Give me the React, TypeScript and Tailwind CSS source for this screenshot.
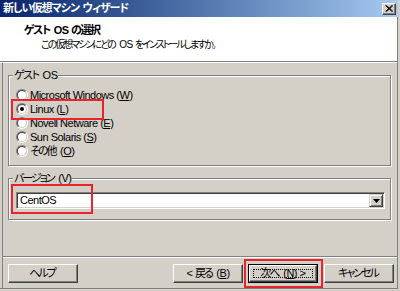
import { ReactNode } from 'react';

const font = "font-['Liberation_Sans','Noto_Sans_CJK_JP',sans-serif] [font-feature-settings:'palt']";

// MS UI Gothic kana are much narrower than Noto's, so Japanese runs get pulled in;
// the right padding gives back the space eaten after the last glyph
const J = ({ children, tight = false }: { children: ReactNode; tight?: boolean }) => (
  <span className={tight ? 'pr-[1.5px] tracking-[-1.5px]' : 'pr-[2px] tracking-[-2px]'}>{children}</span>
);

const Mnemonic = ({ children }: { children: ReactNode }) => <span className="underline underline-offset-1">{children}</span>;

const Radio = ({ checked = false, label }: { checked?: boolean; label: ReactNode }) => (
  <div className="flex h-[14px] items-center">
    <span className="flex h-[12px] w-[12px] items-center justify-center rounded-full border border-t-[#808080] border-l-[#808080] border-b-white border-r-white">
      <span className="flex h-[10px] w-[10px] items-center justify-center rounded-full border border-t-[#404040] border-l-[#404040] border-b-[#d4d0c8] border-r-[#d4d0c8] bg-white">
        {checked && <span className="h-[4px] w-[4px] rounded-full bg-black" />}
      </span>
    </span>
    <span className="ml-[2px] whitespace-pre text-[11px] leading-[13px]">{label}</span>
  </div>
);

const GroupBox = ({ label, className, children }: { label: ReactNode; className: string; children: ReactNode }) => (
  <div className={`relative ml-[5px] mr-[6px] border border-[#808080] shadow-[1px_1px_0_#fff,inset_1px_1px_0_#fff] ${className}`}>
    <span className="absolute -top-[7px] left-[4px] whitespace-pre bg-[#d4d0c8] px-[1px] text-[11px] leading-[13px]">{label}</span>
    {children}
  </div>
);

const Button = ({ children, primary = false }: { children: ReactNode; primary?: boolean }) => (
  <div className={`h-[19px] w-[70px] ${primary ? 'border border-black' : ''}`}>
    <div className="relative flex h-full w-full items-center justify-center whitespace-pre border border-t-white border-l-white border-b-[#404040] border-r-[#404040] bg-[#d4d0c8] text-[11px] leading-[13px] shadow-[inset_-1px_-1px_0_#808080]">
      {primary && <span className="absolute inset-[3px] border border-dotted border-black" />}
      {children}
    </div>
  </div>
);

export default function App() {
  return (
    <div className={`relative h-[291px] w-[400px] overflow-hidden bg-[#d4d0c8] tracking-[-0.5px] text-black ${font}`}>
      <div className="flex h-[289px] w-[398px] flex-col">
        <div className="flex h-[17px] items-center bg-gradient-to-r from-[#0a246a] to-[#a6caf0] pl-[3px] pr-[2px]">
          <span className="flex-1 whitespace-pre text-[11px] font-bold leading-[13px] text-white">
            <span className="pr-[1px] tracking-[-1px]">新しい仮想マシン</span> <span className="tracking-[-1px]">ウィザード</span>
          </span>
          <span className="flex h-[12px] w-[14px] items-center justify-center border border-t-white border-l-white border-b-[#404040] border-r-[#404040] bg-[#d4d0c8] shadow-[inset_-1px_-1px_0_#808080]">
            <svg width="8" height="7" viewBox="0 0 8 7">
              <path d="M0.5 0.5 L7 6.5 M1.5 0.5 L8 6.5 M7 0.5 L0.5 6.5 M8 0.5 L1.5 6.5" stroke="black" strokeWidth="1" />
            </svg>
          </span>
        </div>

        <div className="flex flex-1 flex-col border-r border-[#808080]">
          <div className="h-[44px] bg-white pt-[7px]">
            <div className="whitespace-pre pl-[24px] text-[11px] font-bold leading-[13px]">
              <J tight>ゲスト</J> OS <J tight>の選択</J>
            </div>
            <div className="mt-[2px] whitespace-pre pl-[41px] text-[10px] leading-[12px]">
              <J>この仮想マシンにどの</J> OS <J>をインストールしますか。</J>
            </div>
          </div>
          <div className="h-px bg-[#808080]" />
          <div className="h-px bg-white" />

          <div className="ml-[2px] flex flex-1 flex-col border-l border-[#808080]">
            <GroupBox label={<><J tight>ゲスト</J> OS</>} className="mt-[12px] h-[91px] pl-[7px] pt-[12px]">
              <Radio label={<>Microsoft Windows (<Mnemonic>W</Mnemonic>)</>} />
              <Radio checked label={<>Linux (<Mnemonic>L</Mnemonic>)</>} />
              <Radio label={<>Novell Netware (<Mnemonic>E</Mnemonic>)</>} />
              <Radio label={<>Sun Solaris (<Mnemonic>S</Mnemonic>)</>} />
              <Radio label={<><J>その他</J> (<Mnemonic>O</Mnemonic>)</>} />
            </GroupBox>

            <GroupBox label={<><J>バージョン</J> (V)</>} className="mt-[12px] h-[42px] pl-[7px] pr-[5px] pt-[13px]">
              <div className="flex h-[17px] items-center border border-t-[#808080] border-l-[#808080] border-b-white border-r-white bg-white shadow-[inset_1px_1px_0_#404040,inset_-1px_-1px_0_#d4d0c8]">
                <span className="flex-1 pl-[3px] text-[11px] leading-[13px]">CentOS</span>
                <span className="mr-[1px] flex h-[13px] w-[14px] items-center justify-center border border-t-[#d4d0c8] border-l-[#d4d0c8] border-b-[#404040] border-r-[#404040] bg-[#d4d0c8] shadow-[inset_1px_1px_0_#fff,inset_-1px_-1px_0_#808080]">
                  <svg width="7" height="4" viewBox="0 0 7 4">
                    <path d="M0 0 H7 L3.5 4 Z" fill="black" />
                  </svg>
                </span>
              </div>
            </GroupBox>

            <div className="flex-1" />
            <div className="h-px bg-[#808080]" />
            <div className="h-px bg-white" />

            <div className="flex h-[30px] items-start pl-[5px] pr-[3px] pt-[6px]">
              <Button><J>ヘルプ</J></Button>
              <div className="flex-1" />
              <Button>&lt; <J>戻る</J> (<Mnemonic>B</Mnemonic>)</Button>
              <div className="w-[5px]" />
              <Button primary><J>次へ</J> (<Mnemonic>N</Mnemonic>) &gt;</Button>
              <div className="w-[6px]" />
              <Button><J>キャンセル</J></Button>
            </div>
          </div>
        </div>
        <div className="h-px bg-[#808080]" />
      </div>

      <span className="absolute left-[11px] top-[99px] h-[21px] w-[93px] border-2 border-[#e8242c]" />
      <span className="absolute left-[11px] top-[184px] h-[30px] w-[82px] border-2 border-[#e8242c]" />
      <span className="absolute left-[244px] top-[259px] h-[29px] w-[79px] border-2 border-[#e8242c]" />
    </div>
  );
}
